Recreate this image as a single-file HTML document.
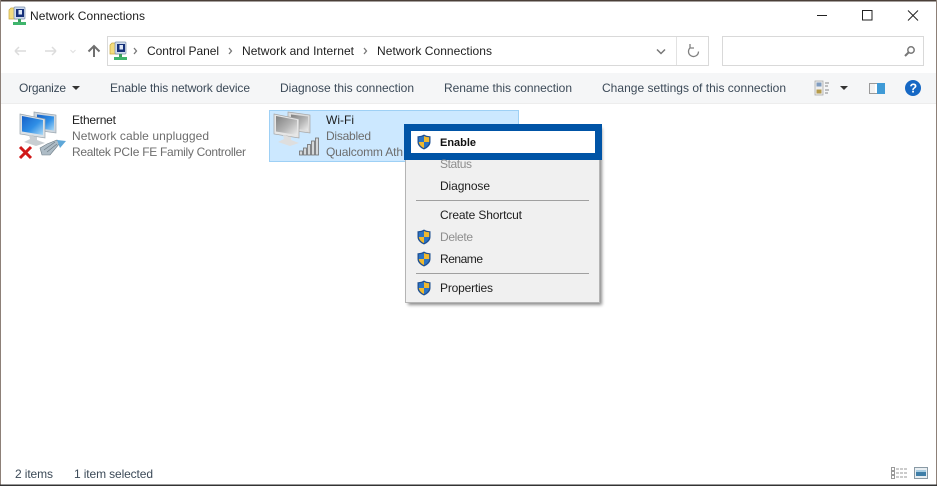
<!DOCTYPE html>
<html><head><meta charset="utf-8"><title>Network Connections</title>
<style>
html,body{margin:0;padding:0;background:#fff;width:937px;height:486px;overflow:hidden}
svg{display:block}
text{font-family:"Liberation Sans",sans-serif;font-size:12px;fill:#1e1e1e}
.g{fill:#6d6d6d}
.t{fill:#3c4a58}
.d{fill:#8e8e8e}
.soft{filter:blur(.35px)}
</style></head><body>
<svg width="937" height="486" viewBox="0 0 937 486" xmlns="http://www.w3.org/2000/svg">
<defs>
<filter id="sb" x="-10%" y="-10%" width="120%" height="120%"><feGaussianBlur stdDeviation="1.600"/></filter>
<linearGradient id="scr" x1="0" y1="0" x2="1" y2="1"><stop offset="0" stop-color="#1560c8"/><stop offset=".55" stop-color="#2f8fe6"/><stop offset="1" stop-color="#a9d8f6"/></linearGradient>
<linearGradient id="gs" x1="0" y1="0" x2="1" y2="1"><stop offset="0" stop-color="#808080"/><stop offset=".55" stop-color="#b4b4b4"/><stop offset="1" stop-color="#ececec"/></linearGradient>
<g id="sh">
<path d="M0-7.500C2.500-6 4.500-5.800 6.500-5.800V0C6.500 3.500 3.500 6 0 7.500C-3.500 6-6.500 3.500-6.500 0V-5.800C-4.500-5.800-2.500-6 0-7.500Z" fill="#1d4f92"/>
<path d="M0-6V0H5.200V-4.800C3.500-4.800 1.800-5 0-6Z" fill="#f0b92e"/>
<path d="M0 0V6C2.500 5 4.800 3 5.200 0Z" fill="#2b73c4"/>
<path d="M0-6V0H-5.200V-4.800C-3.500-4.800-1.800-5 0-6Z" fill="#2b73c4"/>
<path d="M0 0V6C-2.500 5-4.800 3-5.200 0Z" fill="#f0b92e"/>
</g>
<g id="net" class="soft">
<path d="M0 3L2 1H8V12H0Z" fill="#f3dc7e" stroke="#c9a93c" stroke-width=".7"/>
<rect x="5" y="0" width="11" height="12" rx="1" fill="#cfdcee" stroke="#7b8ea8" stroke-width=".7"/>
<rect x="7" y="2" width="8" height="8" fill="#15307a"/>
<rect x="9.500" y="3" width="3.500" height="4.500" fill="#dce6f4"/>
<rect x="9" y="12" width="3" height="3" fill="#3d9c5e"/>
<rect x="4" y="15" width="13" height="3" fill="#3fb56c"/>
</g>
</defs>

<!-- window border -->
<rect x="0" y="0" width="937" height="1.500" fill="#4a3f38"/>
<rect x="0" y="0" width="1" height="486" fill="#8d8078"/>
<rect x="936" y="0" width="1" height="486" fill="#8d8078"/>
<rect x="0" y="484.500" width="937" height="1.500" fill="#333"/>

<!-- title bar -->
<use href="#net" x="9" y="7"/>
<text x="30" y="20" textLength="115">Network Connections</text>
<rect x="817" y="15" width="10" height="1" fill="#222"/>
<rect x="862.500" y="10.500" width="9.500" height="9.500" fill="none" stroke="#222" stroke-width="1"/>
<path d="M908 10.500L918 20.500M918 10.500L908 20.500" stroke="#222" stroke-width="1" fill="none"/>

<!-- nav -->
<path d="M15 51H26M15 51L19 47M15 51L19 55" stroke="#dcdcdc" stroke-width="1.500" fill="none"/>
<path d="M56 51H45M56 51L52 47M56 51L52 55" stroke="#dcdcdc" stroke-width="1.500" fill="none"/>
<path d="M70.500 50L73 52.500L75.500 50" stroke="#e2e2e2" stroke-width="1.200" fill="none"/>
<path d="M94 57V46M88.500 51.500L94 46L99.500 51.500" stroke="#6f6f6f" stroke-width="2" fill="none"/>

<!-- address -->
<rect x="107.500" y="36.500" width="601" height="29" fill="#fff" stroke="#d9d9d9"/>
<use href="#net" x="110" y="42"/>
<path d="M134 48L136.500 51L134 54" stroke="#777" stroke-width="1.300" fill="none"/>
<text x="147" y="55" textLength="72">Control Panel</text>
<path d="M229 48L231.500 51L229 54" stroke="#777" stroke-width="1.300" fill="none"/>
<text x="242" y="55" textLength="112">Network and Internet</text>
<path d="M364 48L366.500 51L364 54" stroke="#777" stroke-width="1.300" fill="none"/>
<text x="377" y="55" textLength="115">Network Connections</text>
<path d="M657 49.500L661 53.500L665 49.500" stroke="#777" stroke-width="1.500" fill="none"/>
<rect x="676" y="37" width="1" height="28" fill="#e2e2e2"/>
<path d="M698.500 51.500A5 5 0 1 1 690.500 47.500M690 44V48H694" stroke="#808080" stroke-width="1.300" fill="none"/>

<!-- search -->
<rect x="722.500" y="36.500" width="201" height="29" fill="#fff" stroke="#d9d9d9"/>
<circle cx="911" cy="50" r="3.200" fill="none" stroke="#777" stroke-width="1.500"/>
<path d="M908.500 52.500L905 56" stroke="#777" stroke-width="2"/>

<!-- toolbar -->
<rect x="1" y="73" width="935" height="30" fill="#f5f6f7"/>
<rect x="1" y="103" width="935" height="1" fill="#ededed"/>
<text class="t" x="19" y="92" textLength="47">Organize</text>
<path d="M72 86H80L76 90Z" fill="#333"/>
<text class="t" x="110" y="92" textLength="140">Enable this network device</text>
<text class="t" x="280" y="92" textLength="134">Diagnose this connection</text>
<text class="t" x="444" y="92" textLength="128">Rename this connection</text>
<text class="t" x="602" y="92" textLength="184">Change settings of this connection</text>
<!-- view icon -->
<rect x="815" y="81" width="8" height="14" fill="#eee" stroke="#aaa" stroke-width=".8"/>
<rect x="816.500" y="82.500" width="5" height="4" fill="#7f9cc0"/>
<rect x="816.500" y="89.500" width="5" height="4" fill="#b59b4a"/>
<path d="M825 83H829M825 86H828M825 90H829M825 93H828" stroke="#888" stroke-width="1"/>
<path d="M840 86H848L844 90Z" fill="#333"/>
<!-- pane icon -->
<rect x="869.500" y="83.500" width="15" height="10" fill="#f2f2f2" stroke="#9a9a9a"/>
<rect x="877" y="83" width="8" height="11" fill="#3f9ad6"/>
<rect x="875" y="84" width="2" height="9" fill="#fff"/>
<!-- help -->
<circle cx="913" cy="88" r="8" fill="#1668c4"/>
<text x="909.500" y="92.500" style="font-size:12.500px;font-weight:bold;fill:#fff">?</text>

<!-- Ethernet item -->
<g class="soft">
<path d="M34 112L56 115V133L34 130Z" fill="#cdd6de" stroke="#9aa6b0" stroke-width=".7"/>
<path d="M37 114.500L54 116.500V130.500L37 128Z" fill="url(#scr)"/>
<path d="M20 114L45 119V138L20 134Z" fill="#dbe1e6" stroke="#9aa5ad" stroke-width=".7"/>
<path d="M22 116L43 120V135L22 131.500Z" fill="url(#scr)"/>
<path d="M29 135L37 137V140L45 143L36 146L24 142L30 139Z" fill="#c9ced2"/>
<path d="M40 148L47 144L57 140L60 143L50 155L42 155Z" fill="#aebcc6" stroke="#6c7b85" stroke-width=".6"/>
<path d="M44 150L55 142M47 152L57 144" stroke="#6c7b85" stroke-width=".7"/>
<path d="M57 140L66 141L60 148Z" fill="#5ea7d8"/>
<path d="M20 147L31 158M31 147L20 158" stroke="#d01818" stroke-width="3"/>
</g>
<text x="72" y="124" textLength="44">Ethernet</text>
<text class="g" x="72" y="140" textLength="137">Network cable unplugged</text>
<text class="g" x="72" y="156" textLength="174">Realtek PCIe FE Family Controller</text>

<!-- Wi-Fi item -->
<rect x="269.500" y="110.500" width="249" height="51" fill="#cce8ff" stroke="#9ed0f5"/>
<g class="soft">
<path d="M288 112L310 115V133L288 130Z" fill="#dcdcdc" stroke="#a5a5a5" stroke-width=".7"/>
<path d="M291 114.500L308 116.500V130.500L291 128Z" fill="url(#gs)"/>
<path d="M274 114L299 119V138L274 134Z" fill="#e6e6e6" stroke="#a5a5a5" stroke-width=".7"/>
<path d="M276 116L297 120V135L276 131.500Z" fill="url(#gs)"/>
<path d="M283 135L291 137V140L299 143L290 146L278 142L284 139Z" fill="#dedede"/>
<g fill="#d4d8da" stroke="#6e6e6e" stroke-width=".8">
<rect x="299.500" y="151" width="3" height="4"/>
<rect x="303.500" y="148" width="3" height="7"/>
<rect x="307.500" y="144.500" width="3" height="10.500"/>
<rect x="311.500" y="141" width="3" height="14"/>
<rect x="315.500" y="138" width="3" height="17"/>
</g>
</g>
<text x="326" y="124" textLength="28">Wi-Fi</text>
<text class="g" x="326" y="140" textLength="45">Disabled</text>
<text class="g" x="326" y="156" textLength="77">Qualcomm Ath</text>

<!-- context menu -->
<rect x="408" y="128" width="194" height="177" fill="#000" opacity=".45" filter="url(#sb)"/>
<rect x="405.500" y="125.500" width="194" height="177" fill="#f0f0f0" stroke="#b4b4b4"/>
<rect x="404" y="124" width="198" height="36" fill="#0054a6"/>
<rect x="411" y="131" width="184" height="22" fill="#fff"/>
<use href="#sh" x="424" y="142"/>
<text x="440" y="146" textLength="36" style="font-size:11px;font-weight:bold;fill:#111">Enable</text>
<text class="d" x="440" y="168" textLength="32">Status</text>
<text x="440" y="190" textLength="50">Diagnose</text>
<rect x="416" y="200" width="173" height="1" fill="#a0a0a0"/>
<text x="440" y="219" textLength="82">Create Shortcut</text>
<use href="#sh" x="424" y="237"/>
<text class="d" x="440" y="241" textLength="33">Delete</text>
<use href="#sh" x="424" y="259"/>
<text x="440" y="263" textLength="43">Rename</text>
<rect x="416" y="273" width="173" height="1" fill="#a0a0a0"/>
<use href="#sh" x="424" y="288"/>
<text x="440" y="292" textLength="53">Properties</text>

<!-- status bar -->
<text class="t" x="15" y="478" textLength="38">2 items</text>
<text class="t" x="74" y="478" textLength="79">1 item selected</text>
<g fill="none" stroke="#9a9a9a" stroke-width="1">
<rect x="891.500" y="467.500" width="3" height="3"/>
<rect x="891.500" y="471.500" width="3" height="3"/>
<rect x="891.500" y="475.500" width="3" height="3"/>
<path d="M896 469H907M896 473H907M896 477H907" stroke-dasharray="3 1"/>
</g>
<rect x="914.500" y="467.500" width="13" height="11" fill="#e8eef2" stroke="#8a9aa5"/>
<rect x="916" y="470" width="10" height="6" fill="#3f7ea8"/>
<rect x="916" y="470" width="10" height="2" fill="#a9cde2"/>
</svg>
</body></html>
